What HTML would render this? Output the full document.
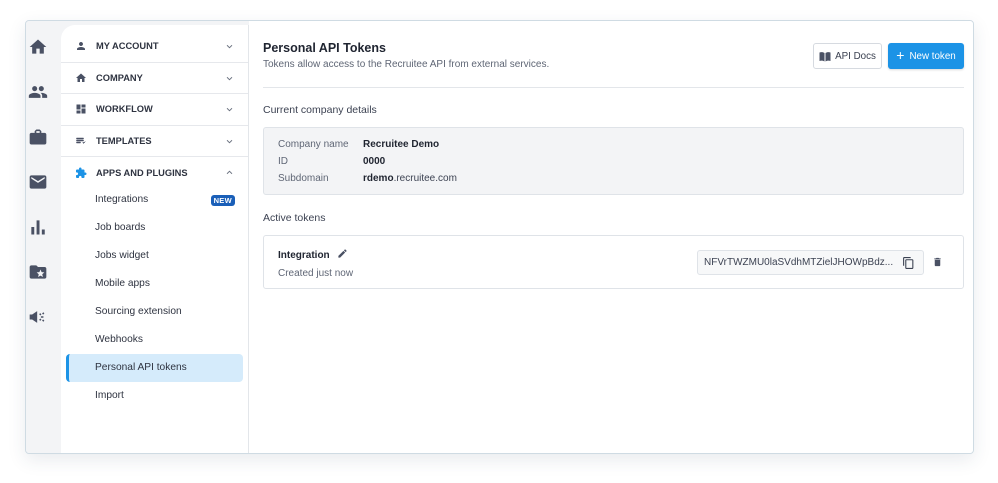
<!DOCTYPE html>
<html><head><style>
*{box-sizing:border-box;margin:0;padding:0}
body{width:998px;height:483px;background:#fff;font-family:"Liberation Sans",sans-serif;position:relative;overflow:hidden;color:#262b36}
.frame{position:absolute;left:25px;top:20px;width:949px;height:434px;border:1px solid #cfdbe3;border-radius:4px;background:#f3f4f6;box-shadow:0 6px 18px rgba(40,60,90,.10);overflow:hidden}
.rail{position:absolute;left:0;top:0;width:35px;height:100%;background:#f3f4f6}
.rail svg{position:absolute;left:2px;width:20px;height:20px;fill:#4a5164}
.menu{position:absolute;left:35px;top:4px;width:188px;height:430px;background:#fff;border-top-left-radius:14px;border-right:1px solid #e3e6ea;padding-top:6px}
.sec{height:31.5px;border-bottom:1px solid #e6e8ec;display:flex;align-items:center;padding-left:14px;font-size:9.3px;font-weight:bold;color:#2e3340;position:relative}
.sec .ic{width:12px;height:12px;margin-right:9px;fill:#4a5164}
.sec .ch{position:absolute;right:15px;top:13px;width:7px;height:5px}
.sub{height:28px;display:flex;align-items:center;padding-left:34px;font-size:10.2px;color:#2e3340;position:relative}
.first{margin-top:-3px}
.sel{margin:0 5px;background:#d5ebfb;border-radius:4px;border-left:3px solid #1c93e6;padding-left:26px}
.new{position:absolute;right:13px;top:9px;background:#1a5fb8;color:#fff;font-size:7.5px;font-weight:bold;padding:1px 3px;border-radius:3px;letter-spacing:.3px}
.main{position:absolute;left:223px;top:0;right:0;height:100%;background:#fff}
h1{position:absolute;left:14px;top:20px;font-size:12.5px;font-weight:bold;color:#1f2430}
.subt{position:absolute;left:14px;top:38px;font-size:10px;color:#5f6675}
.btn{position:absolute;top:22px;height:26px;border-radius:3px;font-size:9.8px;display:flex;align-items:center;justify-content:center}
.b1{left:564px;width:69px;border:1px solid #d6dae0;color:#3a4050}
.b2{left:639px;width:76px;background:#1c93e6;color:#fff;box-shadow:0 1px 2px rgba(0,0,0,.15)}
.hr{position:absolute;left:14px;right:9px;top:66px;border-top:1px solid #e3e6ea}
.lbl{position:absolute;left:14px;font-size:10.5px;color:#3c4252}
.box{position:absolute;left:14px;right:9px;border:1px solid #dfe3e8;border-radius:3px}
.grey{background:#f3f4f6}
.row{position:absolute;left:14px;font-size:10px;color:#5f6675}
.row b{position:absolute;left:85px;color:#1f2430;white-space:nowrap}
.row span{position:absolute;left:85px;white-space:nowrap;color:#3c4252}
</style></head><body>
<div class="frame">
 <div class="rail">
  <svg style="top:16px" viewBox="0 0 24 24"><path d="M10 20v-6h4v6h5v-8h3L12 3 2 12h3v8z"/></svg>
  <svg style="top:61px" viewBox="0 0 24 24"><path d="M16 11c1.7 0 3-1.3 3-3s-1.3-3-3-3-3 1.3-3 3 1.3 3 3 3zm-8 0c1.7 0 3-1.3 3-3S9.7 5 8 5 5 6.3 5 8s1.3 3 3 3zm0 2c-2.3 0-7 1.2-7 3.5V19h14v-2.5C15 14.2 10.3 13 8 13zm8 0c-.3 0-.6 0-1 .1 1.2.8 2 2 2 3.4V19h6v-2.5c0-2.3-4.7-3.5-7-3.5z"/></svg>
  <svg style="top:106px" viewBox="0 0 24 24"><path d="M20 7h-4V5l-2-2h-4L8 5v2H4c-1.1 0-2 .9-2 2v10c0 1.1.9 2 2 2h16c1.1 0 2-.9 2-2V9c0-1.1-.9-2-2-2zm-6 0h-4V5h4v2z"/></svg>
  <svg style="top:151px" viewBox="0 0 24 24"><path d="M20 4H4c-1.1 0-2 .9-2 2v12c0 1.1.9 2 2 2h16c1.1 0 2-.9 2-2V6c0-1.1-.9-2-2-2zm0 4l-8 5-8-5V6l8 5 8-5v2z"/></svg>
  <svg style="top:196px" viewBox="0 0 24 24"><path d="M4 12h3.5v9H4zM10.3 4h3.5v17h-3.5zM16.6 15h3.5v6h-3.5z"/></svg>
  <svg style="top:241px" viewBox="0 0 24 24"><path d="M20 6h-8l-2-2H4c-1.1 0-2 .9-2 2v12c0 1.1.9 2 2 2h16c1.1 0 2-.9 2-2V8c0-1.1-.9-2-2-2zm-2.1 12L15 16.3 12.1 18l.8-3.3-2.5-2.2 3.3-.3L15 9l1.3 3.2 3.3.3-2.5 2.2.8 3.3z"/></svg>
  <svg style="top:286px" viewBox="0 0 24 24"><path d="M2 9v6h3l6 4V5L5 9H2z"/><path d="M14 8l1.5 1.5M14 16l1.5-1.5M15.5 12h3M19 7l-1.5 1.5M19 17l-1.5-1.5" stroke="#4a5164" stroke-width="1.8"/></svg>
 </div>
 <div class="menu">
  <div class="sec"><svg class="ic" viewBox="0 0 24 24"><path d="M12 12c2.2 0 4-1.8 4-4s-1.8-4-4-4-4 1.8-4 4 1.8 4 4 4zm0 2c-2.7 0-8 1.3-8 4v2h16v-2c0-2.7-5.3-4-8-4z"/></svg>MY ACCOUNT<svg class="ch" viewBox="0 0 8 6"><path d="M1 1.5l3 3 3-3" stroke="#6b7280" fill="none" stroke-width="1.1"/></svg></div>
  <div class="sec"><svg class="ic" viewBox="0 0 24 24"><path d="M10 20v-6h4v6h5v-8h3L12 3 2 12h3v8z"/></svg>COMPANY<svg class="ch" viewBox="0 0 8 6"><path d="M1 1.5l3 3 3-3" stroke="#6b7280" fill="none" stroke-width="1.1"/></svg></div>
  <div class="sec"><svg class="ic" viewBox="0 0 24 24"><path d="M3 3h8v10H3zM13 3h8v6h-8zM13 11h8v10h-8zM3 15h8v6H3z"/></svg>WORKFLOW<svg class="ch" viewBox="0 0 8 6"><path d="M1 1.5l3 3 3-3" stroke="#6b7280" fill="none" stroke-width="1.1"/></svg></div>
  <div class="sec"><svg class="ic" viewBox="0 0 24 24"><path d="M3 6h14v2H3zm0 4h14v2H3zm0 4h8v2H3zm12 1l2 2 4-4" stroke="#4a5164" stroke-width="1" fill="#4a5164"/></svg>TEMPLATES<svg class="ch" viewBox="0 0 8 6"><path d="M1 1.5l3 3 3-3" stroke="#6b7280" fill="none" stroke-width="1.1"/></svg></div>
  <div class="sec" style="border:none"><svg class="ic" viewBox="0 0 24 24" style="fill:#1c93e6"><path d="M20.5 11H19V7c0-1.1-.9-2-2-2h-4V3.5a2.5 2.5 0 00-5 0V5H4c-1.1 0-2 .9-2 2v3.8h1.5c1.5 0 2.7 1.2 2.7 2.7S5 16.2 3.5 16.2H2V20c0 1.1.9 2 2 2h3.8v-1.5c0-1.5 1.2-2.7 2.7-2.7s2.7 1.2 2.7 2.7V22H17c1.1 0 2-.9 2-2v-4h1.5a2.5 2.5 0 000-5z"/></svg>APPS AND PLUGINS<svg class="ch" viewBox="0 0 8 6"><path d="M1 4.5l3-3 3 3" stroke="#6b7280" fill="none" stroke-width="1.1"/></svg></div>
  <div class="sub first">Integrations<span class="new">NEW</span></div>
  <div class="sub">Job boards</div>
  <div class="sub">Jobs widget</div>
  <div class="sub">Mobile apps</div>
  <div class="sub">Sourcing extension</div>
  <div class="sub">Webhooks</div>
  <div class="sub sel">Personal API tokens</div>
  <div class="sub">Import</div>
 </div>
 <div class="main">
  <h1>Personal API Tokens</h1>
  <div class="subt">Tokens allow access to the Recruitee API from external services.</div>
  <div class="btn b1"><svg width="12" height="11" viewBox="0 0 24 22" style="margin-right:4px"><path d="M1 3c3-1 7-1 10 1v17c-3-2-7-2-10-1zM13 4c3-2 7-2 10-1v17c-3-1-7-1-10 1z" fill="#4a5164"/></svg>API Docs</div>
  <div class="btn b2"><span style="font-size:14px;margin-right:5px;margin-top:-2px">+</span>New token</div>
  <div class="hr"></div>
  <div class="lbl" style="top:83px">Current company details</div>
  <div class="box grey" style="top:106px;height:68px">
   <div class="row" style="top:11px">Company name<b>Recruitee Demo</b></div>
   <div class="row" style="top:28px">ID<b>0000</b></div>
   <div class="row" style="top:45px">Subdomain<span><b style="position:static">rdemo</b>.recruitee.com</span></div>
  </div>
  <div class="lbl" style="top:191px">Active tokens</div>
  <div class="box" style="top:214px;height:54px">
   <div style="position:absolute;left:14px;top:12px;font-size:10px;font-weight:bold;color:#1f2430">Integration <svg width="11" height="11" viewBox="0 0 24 24" style="margin-left:5px;vertical-align:-1px"><path d="M3 17.25V21h3.75L17.8 9.94l-3.75-3.75zM20.7 7.04a1 1 0 000-1.41l-2.34-2.34a1 1 0 00-1.41 0l-1.83 1.83 3.75 3.75z" fill="#4a5164"/></svg></div>
   <div style="position:absolute;left:14px;top:32px;font-size:10px;color:#5f6675">Created just now</div>
   <div style="position:absolute;left:433px;top:14px;width:227px;height:25px;border:1px solid #dfe3e8;border-radius:3px;background:#f7f8f9;font-size:10px;color:#3c4252;padding:6px 0 0 6px;white-space:nowrap">NFVrTWZMU0laSVdhMTZielJHOWpBdz...
    <svg width="13" height="14" viewBox="0 0 24 24" style="position:absolute;right:8px;top:5px"><path d="M16 1H4c-1.1 0-2 .9-2 2v14h2V3h12V1zm3 4H8c-1.1 0-2 .9-2 2v14c0 1.1.9 2 2 2h11c1.1 0 2-.9 2-2V7c0-1.1-.9-2-2-2zm0 16H8V7h11v14z" fill="#3c4252"/></svg></div>
   <svg width="11" height="12" viewBox="0 0 24 24" style="position:absolute;left:668px;top:20px"><path d="M6 19c0 1.1.9 2 2 2h8c1.1 0 2-.9 2-2V7H6v12zM19 4h-3.5l-1-1h-5l-1 1H5v2h14V4z" fill="#4a5164"/></svg>
  </div>
 </div>
</div>
</body></html>
